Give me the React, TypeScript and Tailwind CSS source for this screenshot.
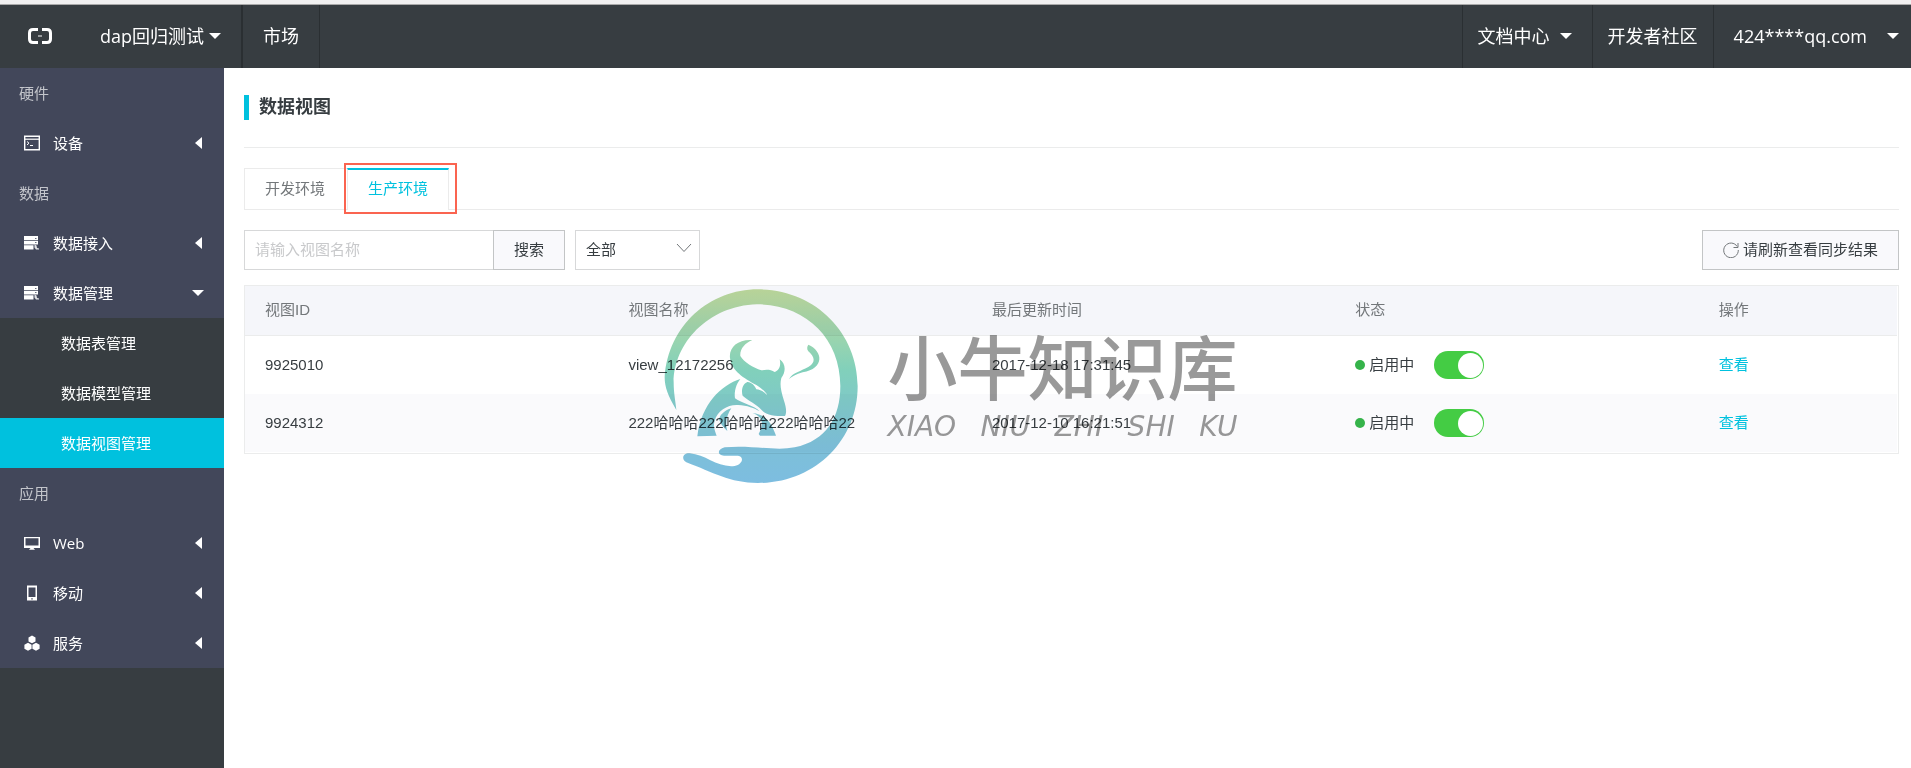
import type { ReactNode } from 'react';

type NavItem = {
  label: string;
  icon: ReactNode;
  open?: boolean;
  children?: { label: string; active?: boolean }[];
};

type NavGroup = { title: string; items: NavItem[] };

const TerminalIcon = () => (
  <svg width="16" height="16" viewBox="0 0 16 16" fill="none" stroke="currentColor">
    <path d="M.7 1.200h14.600v13.600H.7z" strokeWidth="1.400" />
    <path d="M1 4.200h14" strokeWidth="1.200" />
    <path d="M3 6.500l2 1.700-2 1.700M6 10.500h3" />
  </svg>
);

const DatabaseIcon = () => (
  <svg width="16" height="16" viewBox="0 0 16 16" fill="currentColor">
    <path d="M0 1h14v4H0zM0 5.700h14V9.500H0zM0 10.200h9.500V14.500H0z" />
    <path d="M10.500 9.500l2 1 .5 2.500 2 .5v1h-3l-1.500-2z" opacity=".85" />
    <path d="M11 3.500h1.500M11 7.500h1.500" stroke="#6d7182" />
  </svg>
);

const MonitorIcon = () => (
  <svg width="16" height="16" viewBox="0 0 16 16" fill="currentColor">
    <path fillRule="evenodd" d="M0 2h16v11H0zM1.500 3.300v7.200h13V3.300zM6.500 13h3l1.500 1.800H5z" />
  </svg>
);

const PhoneIcon = () => (
  <svg width="16" height="16" viewBox="0 0 16 16" fill="currentColor">
    <path fillRule="evenodd" d="M3 .5h10v15H3zM4.500 2.500v9.500h7V2.500zM7.300 13.200h1.400v1.200H7.300z" />
  </svg>
);

const CubesIcon = () => (
  <svg width="16" height="16" viewBox="0 0 16 16" fill="currentColor">
    <path d="M8 .5l3.500 2v4L8 8.300 4.500 6.500v-4zM4 7.700l3.600 2v4L4 15.700l-3.600-2v-4zM12 7.700l3.600 2v4l-3.600 2-3.600-2v-4z" />
  </svg>
);

const RefreshIcon = () => (
  <svg width="16" height="16" viewBox="0 0 16 16" fill="none" stroke="#73777a">
    <path d="M14.200 4.500A7.300 7.300 0 1 0 15.300 8M15 1v4.500h-4.500" />
  </svg>
);

const CaretDown = () => (
  <svg width="12" height="6" viewBox="0 0 12 6" fill="currentColor">
    <path d="M0 0h12L6 6z" />
  </svg>
);

const CaretLeft = () => (
  <svg width="7" height="12" viewBox="0 0 7 12" fill="currentColor">
    <path d="M7 0v12L0 6z" />
  </svg>
);

const navGroups: NavGroup[] = [
  { title: '硬件', items: [{ label: '设备', icon: <TerminalIcon /> }] },
  {
    title: '数据',
    items: [
      { label: '数据接入', icon: <DatabaseIcon /> },
      {
        label: '数据管理',
        icon: <DatabaseIcon />,
        open: true,
        children: [
          { label: '数据表管理' },
          { label: '数据模型管理' },
          { label: '数据视图管理', active: true },
        ],
      },
    ],
  },
  {
    title: '应用',
    items: [
      { label: 'Web', icon: <MonitorIcon /> },
      { label: '移动', icon: <PhoneIcon /> },
      { label: '服务', icon: <CubesIcon /> },
    ],
  },
];

const views = [
  { id: '9925010', name: 'view_12172256', updated: '2017-12-18 17:31:45' },
  { id: '9924312', name: '222哈哈哈222哈哈哈222哈哈哈22', updated: '2017-12-10 16:21:51' },
];

const Header = () => (
  <header className="border-t-4 border-[#f0f0f0] bg-[#373d41] text-white">
    <div className="flex h-16 items-stretch border-t border-[#a9a9a9] text-lg">
      <a href="#" aria-label="首页" className="flex items-center pr-12 pb-0.5 pl-7">
        <svg width="24" height="16" viewBox="0 0 24 16" fill="none" stroke="currentColor">
          <path d="M10 1.500H5Q1.500 1.500 1.500 5v6q0 3.500 3.500 3.500h5M14 1.500h5q3.500 0 3.500 3.500v6q0 3.500-3.500 3.500h-5" strokeWidth="3" />
          <path d="M10 8h4" strokeWidth="1" />
        </svg>
      </a>
      <button type="button" className="flex items-center gap-[5px] border-r-2 border-[#2a2f32] pr-5 pb-0.5">
        dap回归测试
        <CaretDown />
      </button>
      <a href="#" className="flex items-center border-r border-[#2a2f32] px-5 pb-0.5">市场</a>
      <div className="ml-auto flex">
        <button type="button" className="flex items-center gap-[10px] border-l border-[#2a2f32] pr-5 pb-0.5 pl-[15px]">
          文档中心
          <CaretDown />
        </button>
        <a href="#" className="flex items-center border-l border-[#2a2f32] px-[15px] pb-0.5">开发者社区</a>
        <button type="button" className="flex items-center gap-5 border-l border-[#2a2f32] pr-3 pb-0.5 pl-5">
          424****qq.com
          <CaretDown />
        </button>
      </div>
    </div>
  </header>
);

const Sidebar = () => (
  <aside className="w-56 shrink-0 bg-[#373d41] text-[15px] text-white">
    <nav className="bg-[#42475a]">
      {navGroups.map((group) => (
        <div key={group.title}>
          <h2 className="flex h-[50px] items-center px-[19px] text-[#c3c5cb]">{group.title}</h2>
          {group.items.map((item) => (
            <div key={item.label}>
              <button type="button" className="flex h-[50px] w-full items-center pr-5 pl-6">
                {item.icon}
                <span className="mr-auto ml-[13px]">{item.label}</span>
                <span className="flex w-3 justify-center">
                  {item.open ? <CaretDown /> : <CaretLeft />}
                </span>
              </button>
              {item.children?.map((child) => (
                <a
                  key={child.label}
                  href="#"
                  className={`flex h-[50px] items-center pl-[61px] ${child.active ? 'bg-[#00c1de]' : 'bg-[#373d41]'}`}
                >
                  {child.label}
                </a>
              ))}
            </div>
          ))}
        </div>
      ))}
    </nav>
  </aside>
);

const Tabs = () => (
  <div className="mt-5 flex h-[42px] border-b border-[#ebebeb]" role="tablist">
    <button type="button" role="tab" aria-selected="false" className="border-t border-l border-[#ebebeb] pr-[22px] pl-5 text-[#73777a]">
      开发环境
    </button>
    <div className="relative -mb-px flex">
      <button type="button" role="tab" aria-selected="true" className="border-x border-t-2 border-x-[#ebebeb] border-t-[#00c1de] bg-white px-5 pb-0.5 text-[#00c1de]">
        生产环境
      </button>
      {/* highlight frame around the current tab */}
      <span className="pointer-events-none absolute -top-[5px] -right-2 -bottom-1 -left-[3px] border-2 border-[#fa6450]" />
    </div>
  </div>
);

const Toolbar = () => (
  <div className="mt-5 flex h-10 text-[#373d41]">
    <input
      type="text"
      aria-label="视图名称"
      placeholder="请输入视图名称"
      className="w-[250px] border border-[#d7d8d9] px-[10px] placeholder:text-[#c8c9cb]"
    />
    <button type="button" className="-ml-px border border-[#c3c5c6] bg-[#f9f9fc] px-5">搜索</button>
    <div className="relative ml-[10px] flex w-[125px]">
      <select aria-label="状态" className="w-full appearance-none border border-[#d7d8d9] bg-white px-[10px]">
        <option>全部</option>
      </select>
      <svg className="pointer-events-none absolute top-3 right-2" width="16" height="12" viewBox="0 0 16 12" fill="none" stroke="#73777a">
        <path d="M1 2l7 7.500L15 2" />
      </svg>
    </div>
    <button type="button" className="ml-auto flex items-center gap-1 border border-[#c3c5c6] bg-[#f9f9fc] px-5">
      <RefreshIcon />
      请刷新查看同步结果
    </button>
  </div>
);

const ViewTable = () => (
  <table className="mt-[15px] w-full table-fixed border-separate border-spacing-0 border border-[#ebecec] pr-px pb-px text-left">
    <thead>
      <tr className="h-[50px] bg-[#f5f6fa] text-[#73777a]">
        <th className="w-[22%] border-b border-[#ebecec] px-5 font-normal">视图ID</th>
        <th className="w-[22%] border-b border-[#ebecec] px-5 font-normal">视图名称</th>
        <th className="w-[22%] border-b border-[#ebecec] px-5 font-normal">最后更新时间</th>
        <th className="w-[22%] border-b border-[#ebecec] px-5 font-normal">状态</th>
        <th className="border-b border-[#ebecec] px-5 font-normal">操作</th>
      </tr>
    </thead>
    <tbody className="text-[#373d41]">
      {views.map((view) => (
        <tr key={view.id} className="h-[58px] even:bg-[#fafafc]">
          <td className="px-5">{view.id}</td>
          <td className="px-5">{view.name}</td>
          <td className="px-5">{view.updated}</td>
          <td className="px-5">
            <label className="flex items-center">
              <span className="mr-1 size-[10px] rounded-full bg-[#35b34a]" />
              启用中
              <input
                type="checkbox"
                role="switch"
                defaultChecked
                className="ml-5 flex h-7 w-[50px] appearance-none items-center justify-end rounded-full bg-[#44cc44] pr-px before:size-[25px] before:rounded-full before:bg-white"
              />
            </label>
          </td>
          <td className="px-5">
            <a href="#" className="text-[#00c1de]">查看</a>
          </td>
        </tr>
      ))}
    </tbody>
  </table>
);

const Watermark = () => (
  <div className="pointer-events-none absolute inset-0 flex items-center justify-center gap-[30px] pt-[3px] pr-[10px] mix-blend-multiply">
    <svg width="194" height="194" viewBox="68 55 582 582">
      <defs>
        <linearGradient id="wm" gradientUnits="userSpaceOnUse" x1="0" y1="56" x2="0" y2="637">
          <stop offset="0" stopColor="#c0db9b" />
          <stop offset=".42" stopColor="#81d0bb" />
          <stop offset=".8" stopColor="#7dc0d8" />
          <stop offset="1" stopColor="#7dbde0" />
        </linearGradient>
      </defs>
      <g fill="url(#wm)">
        <path d="M105 418C80 375 70 350 70 320C80 165 205 56 350 56C520 56 649 185 649 346C649 510 520 637 350 637C265 637 215 605 135 575C119 566 124 547 145 548C195 552 228 592 280 586C305 580 309 558 290 555L248 555C228 554 226 537 250 530C330 522 400 542 460 530C555 510 597 440 597 346C597 200 490 101 347 101C200 105 97 220 97 335C97 370 103 395 105 418Z" />
        <path d="M333 208C290 205 262 230 266 262C271 302 308 322 345 343C363 354 376 368 377 373C369 364 357 357 345 356C341 345 329 333 318 334C303 340 299 360 304 375C320 390 346 400 360 417C375 435 400 436 431 436C437 425 434 408 428 390C418 358 415 340 420 322C434 302 434 280 415 266C420 287 412 301 400 304C388 296 375 296 360 299C335 291 308 275 297 256C295 235 310 218 333 208Z" />
        <path d="M297 325C240 343 180 400 168 497L226 495C220 478 215 466 220 450C228 420 260 401 290 403C318 404 339 413 355 422C340 405 300 397 281 383C278 362 285 339 297 325Z" />
        <path d="M270 413C245 421 236 435 233 446C240 464 247 471 258 481C250 455 258 430 270 413ZM333 427C362 437 370 455 352 490L356 495L404 495C394 470 382 432 333 427Z" />
        <path d="M501 222C545 241 551 293 484 305C464 311 451 318 443 325C453 306 480 301 502 288C525 275 519 258 501 242C496 235 497 227 501 222Z" />
      </g>
    </svg>
    <div className="flex flex-col items-stretch gap-1 pt-2 text-[#999]">
      <p className="text-[70px] leading-[70px] font-medium">小牛知识库</p>
      <p className="flex justify-between font-['DejaVu_Sans',sans-serif] text-[28px] leading-[40px] font-extralight italic">
        <span>XIAO</span>
        <span>NIU</span>
        <span>ZHI</span>
        <span>SHI</span>
        <span>KU</span>
      </p>
    </div>
  </div>
);

export default function App() {
  return (
    <div className="relative flex min-h-screen flex-col bg-white font-['Open_Sans','Noto_Sans_CJK_SC',sans-serif]">
      <Header />
      <div className="flex flex-1">
        <Sidebar />
        <main className="min-w-0 flex-1 pr-3 pl-5 font-['Liberation_Sans','Noto_Sans_CJK_SC',sans-serif] text-[15px]">
          <div className="flex h-20 items-center border-b border-[#ebecec]">
            <h1 className="border-l-[5px] border-[#00c1de] pl-[10px] text-lg leading-[25px] font-bold text-[#373d41]">
              数据视图
            </h1>
          </div>
          <Tabs />
          <Toolbar />
          <ViewTable />
        </main>
      </div>
      <Watermark />
    </div>
  );
}
